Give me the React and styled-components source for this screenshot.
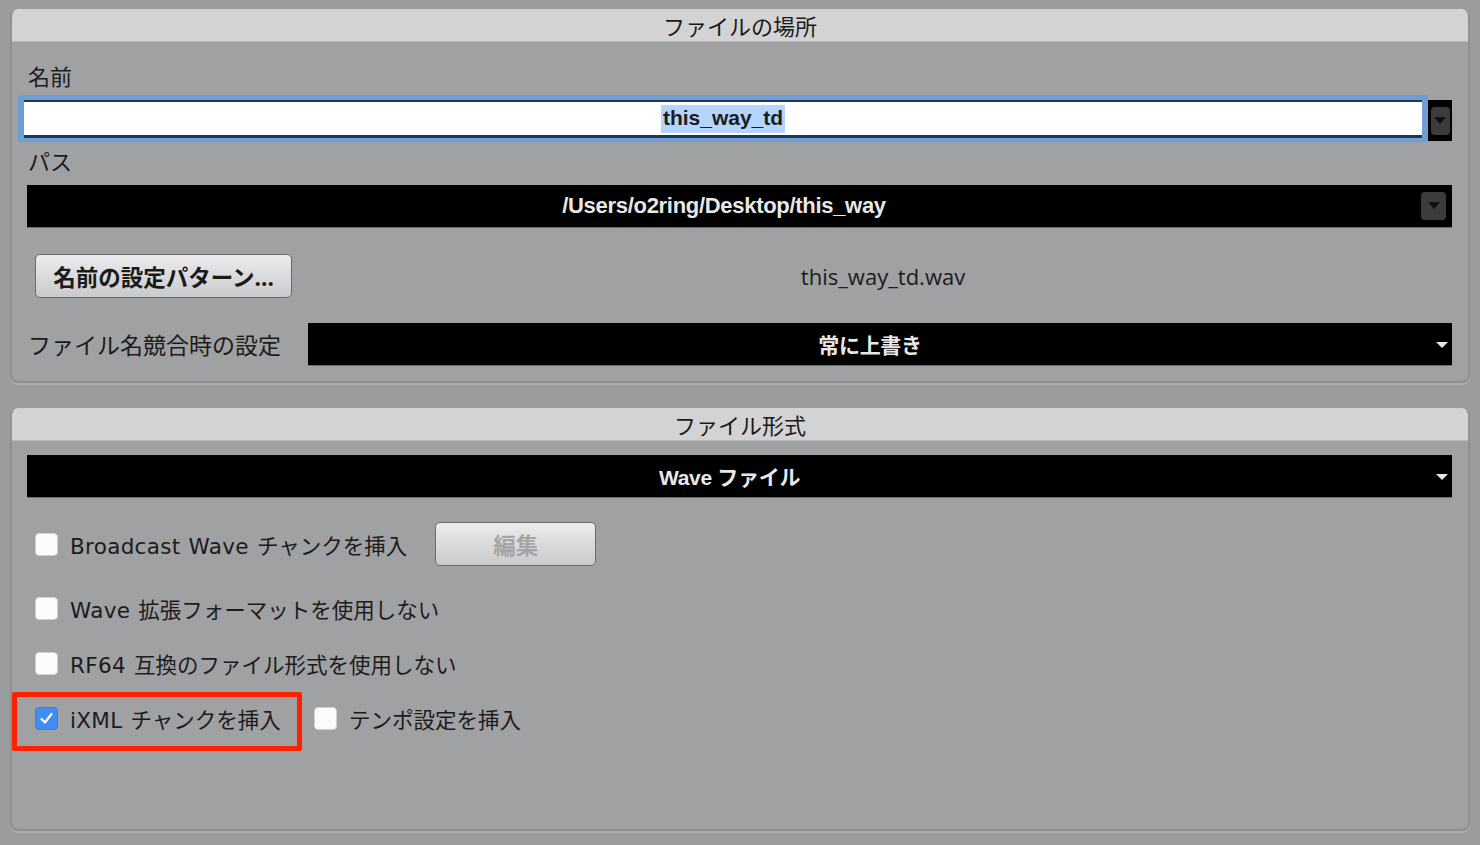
import React from 'react'
import styled, { createGlobalStyle } from 'styled-components'

const GlobalStyle = createGlobalStyle`
  html, body {
    margin: 0;
    padding: 0;
    background: #9b9c9e;
    font-family: "Open Sans", "Noto Sans CJK JP", sans-serif;
    color: #1c1c1c;
  }
`

const Page = styled.div`
  width: 1480px;
  height: 845px;
  padding: 9px 10px 0;
  box-sizing: border-box;
  display: flex;
  flex-direction: column;
  gap: 25px;
`

const Panel = styled.section`
  height: ${p => p.h}px;
  box-sizing: border-box;
  background: #a0a1a3;
  border: 2px solid #8f9092;
  border-top: none;
  border-radius: 8px;
  box-shadow: 0 2px 0 #acadaf;
  overflow: hidden;
  display: flex;
  flex-direction: column;
`

const PanelHeader = styled.div`
  height: 32px;
  background: #d3d3d3;
  display: flex;
  align-items: center;
  justify-content: center;
  font-size: 22px;
  color: #1a1a1a;
  border-bottom: 1px solid #b9babc;
  margin: 0 -2px;
`

const Body = styled.div`
  padding: 0 16px 0 15px;
  display: flex;
  flex-direction: column;
`

const Label = styled.div`
  font-size: 22px;
  line-height: 26px;
  margin: ${p => p.m || '0'};
  padding-left: 1px;
`

const NameRow = styled.div`
  display: flex;
  height: 41px;
  margin-top: 11px;
`

const FocusField = styled.div`
  flex: 1;
  margin: -5px 0 -1px -9px;
  padding: 5px 6px 4px 6px;
  background: #6f9ed6;
  border-radius: 3px;
  display: flex;
`

const NameInput = styled.div`
  flex: 1;
  background: #fff;
  border-top: 2px solid #1f3655;
  border-bottom: 3px solid #1f3655;
  display: flex;
  align-items: center;
  justify-content: center;
  font-family: "Liberation Sans", "Noto Sans CJK JP", sans-serif;
  font-size: 21px;
  font-weight: bold;
`

const Selected = styled.span`
  background: #b4d5fd;
  padding: 1px 2px 3px;
`

const SideButton = styled.div`
  width: 24px;
  background: #000;
  display: flex;
  align-items: center;
  justify-content: center;
`

const DarkKnob = styled.div`
  width: ${p => p.w || 20}px;
  height: ${p => p.h || 27}px;
  margin-right: ${p => p.mr || 0}px;
  border-radius: 4px;
  background: #3c3c3e;
  display: flex;
  align-items: center;
  justify-content: center;
`

const BlackField = styled.div`
  height: 42px;
  flex: ${p => (p.grow ? 1 : 'none')};
  margin-top: ${p => p.mt || 0}px;
  background: #000;
  color: #e8e8e8;
  font-family: "Liberation Sans", "Noto Sans CJK JP", sans-serif;
  font-weight: bold;
  font-size: ${p => p.fs || 20}px;
  display: flex;
  align-items: center;
  border-bottom: 1px solid #6e6f71;
`

const FieldText = styled.div`
  flex: 1;
  text-align: center;
  letter-spacing: -0.3px;
`

const Caret = styled.div`
  width: 0;
  height: 0;
  border-left: 6px solid transparent;
  border-right: 6px solid transparent;
  border-top: 6px solid #e6e6e6;
  margin: 2px 4px 0 4px;
`

const Row = styled.div`
  display: flex;
  align-items: center;
  height: ${p => p.h}px;
  margin-top: ${p => p.mt}px;
`

const MacButton = styled.div`
  height: 44px;
  box-sizing: border-box;
  border: 1.5px solid #6a6b6d;
  border-radius: 5px;
  background: linear-gradient(#ececee, #c9cacc);
  display: flex;
  align-items: center;
  justify-content: center;
  font-size: 22.5px;
  font-weight: bold;
  color: ${p => (p.disabled ? '#a4a5a7' : '#1a1a1a')};
  width: ${p => p.w}px;
  margin-left: ${p => p.ml}px;
`

const Filename = styled.div`
  flex: 1;
  text-align: center;
  font-size: 22px;
  padding-left: 22px;
`

const InlineLabel = styled.div`
  font-size: 23px;
  padding-left: 1px;
  width: 280px;
`

const CheckItem = styled.label`
  display: flex;
  align-items: center;
  gap: 12px;
  height: 30px;
  font-size: 21.5px;
  margin-left: ${p => p.ml || 0}px;
`

const Latin = styled.span`
  font-family: "DejaVu Sans", sans-serif;
  font-size: 21.5px;
  letter-spacing: 0.3px;
  word-spacing: 1px;
`

const Box = styled.span`
  width: 23px;
  height: 23px;
  box-sizing: border-box;
  border-radius: 4px;
  background: ${p => (p.checked ? '#3f8ef5' : '#fbfbfb')};
  border: 1px solid ${p => (p.checked ? '#3a7fd8' : '#d0d0d0')};
  display: flex;
  align-items: center;
  justify-content: center;
`

const Highlight = styled.div`
  position: relative;
  display: flex;
  &::after {
    content: '';
    position: absolute;
    left: -15px;
    top: -11px;
    right: -21px;
    bottom: -18px;
    border: 5px solid #ff2200;
    border-radius: 2px;
  }
`

const Checkbox = ({ checked, latin, children, ml }) => (
  <CheckItem ml={ml}>
    <Box checked={checked}>
      {checked && (
        <svg width="15" height="15" viewBox="0 0 15 15">
          <path d="M2.5 8 L6 11.5 L12.5 3" fill="none" stroke="#fff" strokeWidth="2.2" strokeLinecap="round" strokeLinejoin="round" />
        </svg>
      )}
    </Box>
    <span>{latin && <Latin>{latin} </Latin>}{children}</span>
  </CheckItem>
)

const Tri = ({ color = '#111' }) => (
  <svg width="12" height="8" viewBox="0 0 12 8">
    <path d="M0 0 H12 L6 7 Z" fill={color} />
  </svg>
)

const App = () => (
  <>
    <GlobalStyle />
    <Page>
      <Panel h={374}>
        <PanelHeader>ファイルの場所</PanelHeader>
        <Body>
          <Label m="21px 0 0">名前</Label>
          <NameRow>
            <FocusField>
              <NameInput><Selected>this_way_td</Selected></NameInput>
            </FocusField>
            <SideButton>
              <DarkKnob w={19} h={28}><Tri /></DarkKnob>
            </SideButton>
          </NameRow>
          <Label m="7px 0 0">パス</Label>
          <BlackField mt={11} fs={22}>
            <FieldText>/Users/o2ring/Desktop/this_way</FieldText>
            <DarkKnob w={25} h={28} mr={6}><Tri /></DarkKnob>
          </BlackField>
          <Row h={44} mt={26}>
            <MacButton w={257} ml={8}>名前の設定パターン...</MacButton>
            <Filename>this_way_td.wav</Filename>
          </Row>
          <Row h={42} mt={25}>
            <InlineLabel>ファイル名競合時の設定</InlineLabel>
            <BlackField grow fs={21}>
              <FieldText>常に上書き</FieldText>
              <Caret />
            </BlackField>
          </Row>
        </Body>
      </Panel>
      <Panel h={423}>
        <PanelHeader>ファイル形式</PanelHeader>
        <Body>
          <BlackField mt={14} fs={21}>
            <FieldText>Wave ファイル</FieldText>
            <Caret />
          </BlackField>
          <Row h={46} mt={23}>
            <Checkbox ml={8} latin="Broadcast Wave">チャンクを挿入</Checkbox>
            <MacButton w={161} ml={28} disabled>編集</MacButton>
          </Row>
          <Row h={30} mt={26}>
            <Checkbox ml={8} latin="Wave">拡張フォーマットを使用しない</Checkbox>
          </Row>
          <Row h={30} mt={25}>
            <Checkbox ml={8} latin="RF64">互換のファイル形式を使用しない</Checkbox>
          </Row>
          <Row h={30} mt={25}>
            <Highlight>
              <Checkbox ml={8} checked latin="iXML">チャンクを挿入</Checkbox>
            </Highlight>
            <Checkbox ml={33}>テンポ設定を挿入</Checkbox>
          </Row>
        </Body>
      </Panel>
    </Page>
  </>
)

export default App
